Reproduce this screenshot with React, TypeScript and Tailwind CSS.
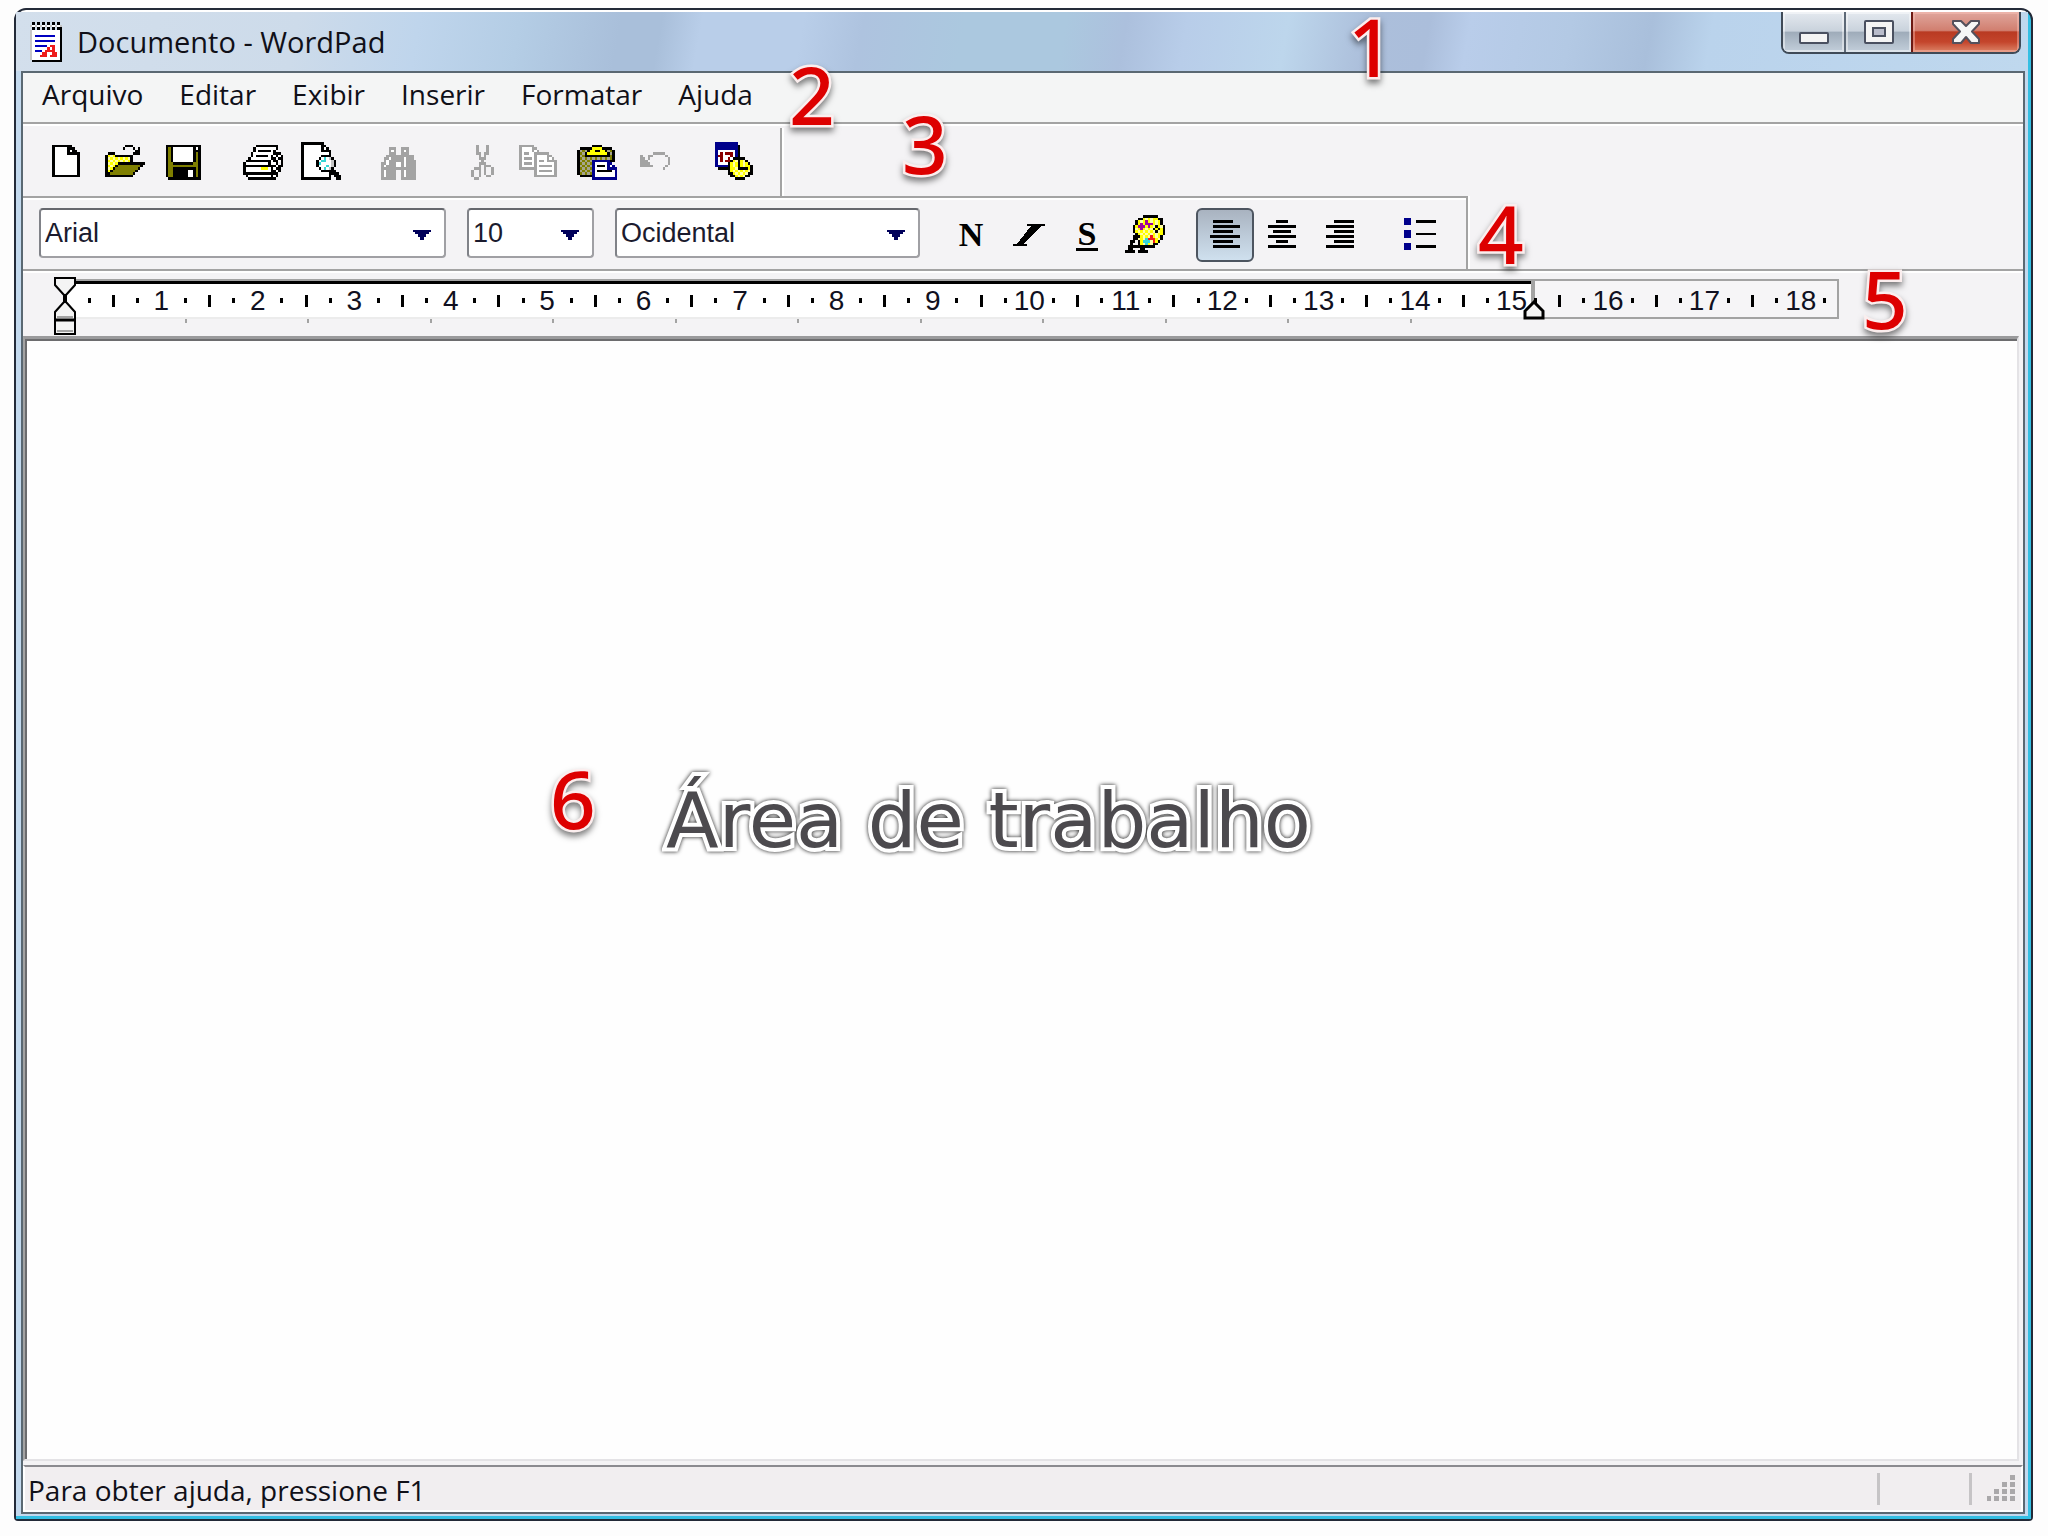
import React from "react";

const colors: Record<string, string> = {
  k: "#000000",
  w: "#ffffff",
  y: "#ffff00",
  l: "#ffffa6",
  o: "#7f7f00",
  p: "#a6a68c",
  g: "#a3a3a3",
  b: "#00008b",
  B: "#0000c0",
  r: "#8b0000",
  R: "#ee1c1c",
  c: "#35d6d6",
  m: "#a000a0",
  n: "#c6c6c6",
};

const icons = {
  app: [
    "..k.k.k.k.k.k...",
    ".nwnwnwnwnwnwn..",
    "..k.k.k.k.k.kk..",
    ".nwwwwwwwwwwwk..",
    ".nwwwwwwwwwwwk..",
    ".nwBBBBBBBBwwk..",
    ".nwwwwwwwwwwwk..",
    ".nwBBBBBBBBwwk..",
    ".nwwwwwwwwwwwk..",
    ".nwBBBBBwRRwwk..",
    ".nwwwwwwRwRwwk..",
    ".nwBBBwRRRRwwk..",
    ".nwwwwRRwwRRwk..",
    ".nwwwRRRwRRRwk..",
    ".nwwwwwwwwwwwk..",
    "..kkkkkkkkkkkk..",
  ],
  novo: [
    "",
    "..kkkkkkkk......",
    "..kwwwwwkkk.....",
    "..kwwwwwkwkk....",
    "..kwwwwwkkkkk...",
    "..kwwwwwwwwwk...",
    "..kwwwwwwwwwk...",
    "..kwwwwwwwwwk...",
    "..kwwwwwwwwwk...",
    "..kwwwwwwwwwk...",
    "..kwwwwwwwwwk...",
    "..kwwwwwwwwwk...",
    "..kwwwwwwwwwk...",
    "..kkkkkkkkkkk...",
  ],
  abrir: [
    "",
    "........kkk.....",
    ".......k...k.k..",
    "............kk..",
    ".kkk.......kkk..",
    "kylykkkkkkk.....",
    "klylylylylk.....",
    "kylylylylyk.....",
    "klylykkkkkkkkkkk",
    "kylykoooooooook.",
    "klykoooooooook..",
    "kykoooooooook...",
    "kkoooooooook....",
    "kkkkkkkkkkk.....",
  ],
  salvar: [
    "",
    ".kkkkkkkkkkkkkk.",
    ".kokwwwwwwwwkwk.",
    ".kokwwwwwwwwkkk.",
    ".kokwwwwwwwwkok.",
    ".kokwwwwwwwwkok.",
    ".kokwwwwwwwwkok.",
    ".kokwwwwwwwwkok.",
    ".kookkkkkkkkook.",
    ".kooooooooooook.",
    ".kookkkkkkkkkok.",
    ".kookkkkkkwwkok.",
    ".kookkkkkkwwkok.",
    ".kookkkkkkwwkok.",
    "..kkkkkkkkkkkkk.",
  ],
  imprimir: [
    "",
    ".....kkkkkkkkk..",
    "....kwwwwwwwwk..",
    "....kwkkkkkwk...",
    "...kwwwwwwwwkkk.",
    "...kwkkkkkwkwkwk",
    "..kwwwwwwwwkkwkk",
    ".kkkkkkkkkkwkkwk",
    "kwwwwwwwwwkwwk.k",
    "kkkkkkkkkkkkkwkk",
    "kwwwwwwyyywkwkk.",
    "kwwwwwwwwwwkkwk.",
    "kkkkkkkkkkkkkk..",
    ".kwwwwwwwwwkwk..",
    "..kkkkkkkkkkk...",
  ],
  visualizar: [
    "kkkkkkkkk.......",
    "kwwwwwwwkk......",
    "kwwwwwwwkwk.....",
    "kwwwwwwwkkkk....",
    "kwwwwwwwwwwk....",
    "kwwwwwwwkkkk....",
    "kwwwwwwkwcwnk...",
    "kwwwwwkwccwwnk..",
    "kwwwwwkcwwwwnk..",
    "kwwwwwkwwwcwnk..",
    "kwwwwwwkwcwnk...",
    "kwwwwwwwkkkkkk..",
    "kwwwwwwwwwwkkkk.",
    "kwwwwwwwwwwk.kkk",
    "kkkkkkkkkkkk..kk",
  ],
  localizar: [
    "",
    "",
    "...ggg..ggg.....",
    "...gwg..gwg.....",
    "...ggg..ggg.....",
    "..ggggggggggg...",
    ".ggwgggggwggg...",
    ".gwggggggwgggg..",
    "ggwgggwwgwgggg..",
    "gwggggwwgwgggg..",
    "gggggggggggggg..",
    "gwgggg..gwgggg..",
    "gwgggg..gwgggg..",
    "gwgggg..gwgggg..",
    "gggggg..gggggg..",
  ],
  recortar: [
    "",
    "......g...g.....",
    "......g...g.....",
    "......g...g.....",
    "......gg.gg.....",
    ".......g.g......",
    ".......ggg......",
    "........g.......",
    ".......ggg......",
    ".......g.ggg....",
    ".....ggg.g..g...",
    "....g..g.g..g...",
    "....g..g.g..g...",
    "....g..g..gg....",
    ".....gg.........",
  ],
  copiar: [
    "",
    "gggggg..........",
    "gwwwwgg.........",
    "gwwwwgwg........",
    "gwggwwgggggg....",
    "gwwwwwgwwwwgg...",
    "gwgggwgwwwwgwg..",
    "gwwwwwgwggwgggg.",
    "gwgggwgwwwwwwwg.",
    "gwwwwwgwgggggwg.",
    "gggggggwwwwwwwg.",
    "......gwgggggwg.",
    "......gwwwwwwwg.",
    "......ggggggggg.",
  ],
  colar: [
    "",
    "......kkkk......",
    ".kkkkkyyyykkkk..",
    "kpopkyykkyykpok.",
    "kopkyyyyyyyykpk.",
    "kpokkkkkkkkkkok.",
    "kopopopopopopok.",
    "kpopopbbbbbbbkk.",
    "kopopobwwwwwbb..",
    "kpopopbwkkkwbwb.",
    "kopopobwwwwwbbbb",
    "kpopopbwkkkkkkwb",
    "kopopobwwwwwwwwb",
    ".kkkkkbwwwwwwwwb",
    "......bbbbbbbbbb",
  ],
  desfazer: [
    "",
    "",
    "",
    "",
    ".......ggggg....",
    "..g..gg.....g...",
    "..gg.g.......g..",
    "..ggg........g..",
    "..gggg.......g..",
    "..ggggg.....g...",
    "...........g....",
  ],
  data: [
    "bbbbbbbbb.......",
    "bbbbbbbbbk......",
    "bbbbbbbbbk......",
    "bwwwwwwwbk......",
    "bwrwrrrwbk......",
    "brrwwwrwbk......",
    "bwrwwrwkkkkk....",
    "bwrwrrkylkylk...",
    "bwwwwkylykylyk..",
    "bbbbbkylykylyyk.",
    ".kkkkkyylkkkkyk.",
    ".....kylylylylk.",
    ".....kkylylylkk.",
    "......kkylylkk..",
    "........kkkk....",
  ],
  cor: [
    ".......kkkkkk...",
    ".....kkylylyykk.",
    "....kylymylylyk.",
    "....kymymmmylyk.",
    "...kymmmymylkylk",
    "...klymylylkykyk",
    "...kylylylylklyk",
    "....kylylylylyyk",
    "...kkkylylRylyk.",
    "...kklylcRRRylk.",
    "..kk.kyccclRyk..",
    "..k..kylcylkk...",
    ".kkkkkkkkkkk....",
    ".kk...kk........",
    "kkkk.kkkk.......",
  ],
  esquerda: [
    "",
    "",
    "...kkkkkkkk.....",
    "",
    "...kkkkkkkkkkk..",
    "",
    "...kkkkkkkk.....",
    "",
    "..kkkkkkkkkkkk..",
    "",
    "...kkkkkkkk.....",
    "",
    "...kkkkkkkkkkk..",
  ],
  centro: [
    "",
    "",
    ".....kkkkk......",
    "",
    "..kkkkkkkkkkk...",
    "",
    "....kkkkkkk.....",
    "",
    "..kkkkkkkkkkk...",
    "",
    ".....kkkkk......",
    "",
    "..kkkkkkkkkkk...",
  ],
  direita: [
    "",
    "",
    ".....kkkkkkkk...",
    "",
    "..kkkkkkkkkkk...",
    "",
    ".....kkkkkkkk...",
    "",
    "..kkkkkkkkkkk...",
    "",
    ".....kkkkkkkk...",
    "",
    "..kkkkkkkkkkk...",
  ],
  marcadores: [
    "",
    ".bbb............",
    ".bbb..kkkkkkkk..",
    ".bbb............",
    "",
    "",
    ".bbb............",
    ".bbb..kkkkkkkk..",
    ".bbb............",
    "",
    "",
    ".bbb............",
    ".bbb..kkkkkkkk..",
    ".bbb............",
  ],
};

type IconName = keyof typeof icons;

const PixelIcon = ({ name }: { name: IconName }) => (
  <svg viewBox="0 0 16 16" className="size-10 shrink-0" shapeRendering="crispEdges" aria-hidden="true">
    {icons[name].map((row, y) =>
      row.split("").map((ch, x) =>
        ch === "." ? null : (
          <rect key={`${x}-${y}`} x={x} y={y} width="1" height="1" fill={colors[ch]} />
        )
      )
    )}
  </svg>
);

const ToolButton = ({ label, children, pressed }: { label: string; children: React.ReactNode; pressed?: boolean }) => (
  <button
    aria-label={label}
    title={label}
    className={
      pressed
        ? "flex h-[54px] w-[58px] items-center justify-center rounded-md border-2 border-[#4d5560] bg-linear-to-b from-[#a9b3c0] via-[#bccad8] to-[#cfe0ee]"
        : "flex h-[54px] w-[58px] items-center justify-center"
    }
  >
    {children}
  </button>
);

const Combo = ({ label, value, className }: { label: string; value: string; className: string }) => (
  <div className={`relative h-[50px] ${className}`}>
    <select
      aria-label={label}
      defaultValue={value}
      className="h-full w-full appearance-none rounded-sm border-2 border-[#a0a0a4] border-t-[#66686e] border-l-[#808288] bg-white pl-1 font-['Liberation_Sans'] text-[27px] leading-8 text-[#1b1b2e]"
    >
      <option>{value}</option>
    </select>
    <svg viewBox="0 0 18 10" className="pointer-events-none absolute top-[22px] right-[15px] h-[10px] w-[18px]">
      <path d="M0 0h18v2h-2v2h-3v3h-2v3H7V7H5V4H2V2H0z" fill="#00005a" />
    </svg>
  </div>
);

const Note = ({ n, className }: { n: number; className: string }) => (
  <span
    className={`pointer-events-none absolute z-10 font-['Noto_Sans'] text-[80px] leading-none font-medium text-[#dd0000] [paint-order:stroke_fill] [-webkit-text-stroke:5px_#fbeeee] drop-shadow-[0_4px_3px_rgba(0,0,0,0.5)] ${className}`}
  >
    {n}
  </span>
);

const menus = ["Arquivo", "Editar", "Exibir", "Inserir", "Formatar", "Ajuda"];

const groups: [IconName, string][][] = [
  [["novo", "Novo"], ["abrir", "Abrir"], ["salvar", "Salvar"]],
  [["imprimir", "Imprimir"], ["visualizar", "Visualizar impressão"]],
  [["localizar", "Localizar"]],
  [["recortar", "Recortar"], ["copiar", "Copiar"], ["colar", "Colar"], ["desfazer", "Desfazer"]],
  [["data", "Data e hora"]],
];

const TitleBar = () => (
  <header className="relative flex h-[59px] items-start bg-[linear-gradient(100deg,#d3dfec_0%,#cddbea_14%,#bfd5ec_20%,#b4cde5_25%,#a9bfda_30%,#a9bfda_32%,#b9cee9_34%,#b9cee9_39%,#aec3df_42%,#abc8df_47%,#abc8df_52%,#acc0dd_55%,#b8cde9_58%,#bdd6ec_63%,#acbfdb_67%,#abbedb_70%,#b9cdea_72%,#b3c9e4_77%,#a9bfdb_81%,#bad3ec_84%,#bfd8ee_100%)]">
    <div className="flex flex-1 items-center gap-1 pt-[10px] pl-[11px]">
      <PixelIcon name="app" />
      <h1 className="pl-[6px] text-[29px] leading-10 text-[#101018]">Documento - WordPad</h1>
    </div>
    <div className="mr-[7px] flex h-[42px] overflow-hidden rounded-b-lg border-2 border-t-0 border-[#3f4a57]">
      <button
        aria-label="Minimizar"
        className="flex w-[63px] items-end justify-center border-r-2 border-[#5d6977] bg-[linear-gradient(#e4e9ef_0%,#c9d2dc_48%,#9eabb9_50%,#c3cfdb_100%)] pb-2 shadow-[inset_0_0_0_2px_rgba(255,255,255,0.45)]"
      >
        <svg viewBox="0 0 30 12" className="h-3 w-[30px]">
          <rect x="1" y="1" width="28" height="10" rx="1" fill="#f4f4f4" stroke="#4a5060" strokeWidth="2" />
        </svg>
      </button>
      <button
        aria-label="Maximizar"
        className="flex w-[65px] items-center justify-center bg-[linear-gradient(#e4e9ef_0%,#c9d2dc_48%,#9eabb9_50%,#c3cfdb_100%)] shadow-[inset_0_0_0_2px_rgba(255,255,255,0.45)]"
      >
        <svg viewBox="0 0 30 24" className="h-6 w-[30px]">
          <rect x="1" y="1" width="28" height="22" rx="1" fill="#f4f4f4" stroke="#4a5060" strokeWidth="2" />
          <rect x="9" y="8" width="12" height="8" fill="#b9bccb" stroke="#4a5060" strokeWidth="2" />
        </svg>
      </button>
      <button
        aria-label="Fechar"
        className="flex w-[108px] items-center justify-center border-l-2 border-[#6d1a12] bg-[linear-gradient(#e0a79d_0%,#d17f70_46%,#b93a22_50%,#c4452c_75%,#dc8468_100%)] shadow-[inset_0_0_0_2px_rgba(255,200,190,0.4)]"
      >
        <svg viewBox="0 0 30 24" className="h-6 w-[30px]">
          <path
            d="M2 1H10L15 6L20 1H28V4L21 11.500L28 19V23H20L15 17L10 23H2V19L9 11.500L2 4Z"
            fill="#f6f6f6"
            stroke="#54505c"
            strokeWidth="2"
            strokeLinejoin="round"
          />
        </svg>
      </button>
    </div>
    <Note n={1} className="-top-[6px] left-[1332px]" />
  </header>
);

const Ruler = () => (
  <div className="relative h-[65px] pt-2 pl-[41px]">
    <div className="relative flex h-10 w-[1775px] items-center border-2 border-l-0 border-[#a3a3a3] bg-[linear-gradient(to_right,#ffffff_1467px,#a3a3a3_1467px,#a3a3a3_1471px,#f6f5f7_1471px)] pt-[3px] pl-[13px]">
      {Array.from({ length: 73 }, (_, i) => i + 1).map((i) => (
        <span
          key={i}
          className="flex h-8 min-w-0 flex-1 items-center justify-center font-['Liberation_Sans'] text-[28px] leading-8 text-[#101020]"
        >
          {i % 4 === 0 ? i / 4 : <span className={i % 2 ? "h-[5px] w-[3px] bg-black" : "h-3 w-[3px] bg-black"} />}
        </span>
      ))}
      <div className="absolute top-0 left-0 h-[3px] w-[1467px] bg-black" />
      <div className="absolute -bottom-[2px] left-0 h-[2px] w-[1467px] bg-[#ececec]" />
    </div>
    <div className="flex w-[1348px]">
      {Array.from({ length: 11 }, (_, i) => (
        <div key={i} className="h-1 flex-1 border-r-2 border-[#a3a3a3]" />
      ))}
    </div>
    <svg viewBox="0 0 22 58" className="absolute top-[6px] left-[31px] h-[58px] w-[22px]">
      <path d="M1 1H21V8L12 18V25L21 35V57H1V35L10 25V18L1 8Z" fill="#f4f4f4" stroke="#000" strokeWidth="2" />
      <path d="M11 17V26M1 43H21" stroke="#000" strokeWidth="3" />
      <path d="M3 40H19M3 54H19" stroke="#a3a3a3" strokeWidth="2" />
    </svg>
    <svg viewBox="0 0 22 20" className="absolute top-[29px] left-[1500px] h-5 w-[22px]">
      <path d="M11 2L20 11V18H2V11Z" fill="#f4f4f4" stroke="#000" strokeWidth="3" />
    </svg>
    <Note n={5} className="-top-[13px] left-[1839px]" />
  </div>
);

const App = () => {
  return (
    <div className="flex min-h-screen bg-[#fdfdfd] pt-2 pr-[15px] pb-[15px] pl-[14px] font-['Open_Sans','Noto_Sans',sans-serif]">
      <div className="flex flex-1 rounded-t-xl rounded-b-sm border-2 border-[#232a38] bg-[#232a38]">
        <div className="flex min-w-0 flex-1 flex-col rounded-t-[10px] border-t-2 border-r-[3px] border-b-[3px] border-t-white border-r-[#34bfe3] border-b-[#34bfe3] bg-[#c3d9ee]">
          <TitleBar />
          <div className="mr-[3px] mb-[2px] ml-[5px] flex flex-1 flex-col border-2 border-[#5a6872] bg-[#f4f3f5] shadow-[0_-2px_0_#e3f3f8]">
            <nav className="relative flex h-[49px] items-start gap-9 bg-[#f4f5f5] pl-[19px] text-[28px] leading-[43px] text-[#101018]">
              {menus.map((m) => (
                <button key={m}>{m}</button>
              ))}
              <Note n={2} className="-top-[19px] left-[766px]" />
            </nav>

            <div className="relative flex h-[76px] border-t-2 border-[#a3a3a3] shadow-[inset_0_2px_0_#ffffff]">
              <div className="mt-1 flex h-[70px] items-center gap-[22px] border-r-2 border-[#a3a3a3] pr-4 pb-[2px] pl-[15px] shadow-[2px_0_0_#ffffff]">
                {groups.map((group, i) => (
                  <div key={i} className="flex">
                    {group.map(([name, label]) => (
                      <ToolButton key={name} label={label}>
                        <PixelIcon name={name} />
                      </ToolButton>
                    ))}
                  </div>
                ))}
              </div>
              <Note n={3} className="-top-[21px] left-[879px]" />
            </div>

            <div className="relative flex h-[71px] items-start">
              <div className="-mt-[2px] flex h-[73px] items-start border-t-2 border-r-2 border-[#a3a3a3] pt-[10px] pr-4 pl-4 shadow-[inset_0_2px_0_#ffffff,2px_0_0_#ffffff]">
                <Combo label="Fonte" value="Arial" className="w-[407px]" />
                <Combo label="Tamanho da fonte" value="10" className="ml-[21px] w-[127px]" />
                <Combo label="Script da fonte" value="Ocidental" className="ml-[21px] w-[305px]" />
                <div className="ml-[22px] flex font-['Liberation_Serif'] text-[34px] leading-8 font-bold text-black">
                  <ToolButton label="Negrito">N</ToolButton>
                  <ToolButton label="Itálico">
                    <svg viewBox="0 0 32 22" className="h-[22px] w-8" shapeRendering="crispEdges">
                      <path d="M14 0H32V2H28L10 20H14V22H0V20H4L18 2H14Z" fill="#000" />
                    </svg>
                  </ToolButton>
                  <ToolButton label="Sublinhado">
                    <span className="border-b-[3px] border-black px-[2px] leading-7">S</span>
                  </ToolButton>
                  <ToolButton label="Cor">
                    <PixelIcon name="cor" />
                  </ToolButton>
                </div>
                <div className="ml-[22px] flex">
                  <ToolButton label="Alinhar à esquerda" pressed>
                    <PixelIcon name="esquerda" />
                  </ToolButton>
                  <ToolButton label="Centralizar">
                    <PixelIcon name="centro" />
                  </ToolButton>
                  <ToolButton label="Alinhar à direita">
                    <PixelIcon name="direita" />
                  </ToolButton>
                </div>
                <div className="ml-[22px] flex">
                  <ToolButton label="Marcadores">
                    <PixelIcon name="marcadores" />
                  </ToolButton>
                </div>
              </div>
              <Note n={4} className="-top-[5px] left-[1455px]" />
            </div>

            <div className="border-t-2 border-[#a3a3a3] shadow-[inset_0_2px_0_#ffffff]">
              <Ruler />
            </div>

            <main className="relative mr-1 mb-1 flex flex-1 border-t-[3px] border-r-2 border-b-2 border-l-2 border-[#e4e3e6] border-t-[#9a9a9c] border-l-[#a3a3a3]">
              <textarea
                aria-label="Documento"
                className="flex-1 resize-none border-t-2 border-l-2 border-[#6c6c6e] bg-[#fefefe] outline-none"
              />
              <Note n={6} className="top-[419px] left-[525px]" />
              <p className="pointer-events-none absolute top-[443px] left-[641px] font-['DejaVu_Sans'] text-[77px] leading-none whitespace-nowrap text-[#4c4a4e] [paint-order:stroke_fill] [-webkit-text-stroke:8px_white] drop-shadow-[0_0_2px_rgba(0,0,0,0.9)]">
                Área de trabalho
              </p>
            </main>

            <footer className="flex h-[47px] items-center border-2 border-white border-t-[#8b8b90] bg-[#f1eef0] pr-[6px] pl-[3px]">
              <p className="flex-1 pt-[2px] text-[28px] leading-8 text-[#101018]">Para obter ajuda, pressione F1</p>
              <div className="h-8 w-[92px] border-l-[3px] border-[#c6c4c6]" />
              <div className="h-8 w-[18px] border-l-[3px] border-[#c6c4c6]" />
              <svg viewBox="0 0 28 28" className="h-7 w-7">
                {[0, 1, 2, 3].map((r) =>
                  [0, 1, 2, 3].map((c) =>
                    c + r >= 3 ? <rect key={`${r}-${c}`} x={c * 8 - 1} y={r * 7} width="5" height="5" fill="#aaa8aa" /> : null
                  )
                )}
              </svg>
            </footer>
          </div>
        </div>
      </div>
    </div>
  );
};

export default App;
